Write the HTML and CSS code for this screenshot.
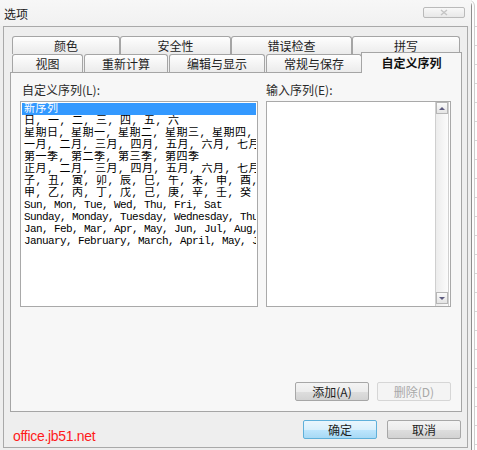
FILE: index.html
```html
<!DOCTYPE html>
<html lang="zh-CN">
<head>
    <meta charset="UTF-8">
    <meta name="viewport" content="width=device-width, initial-scale=1.0">
    <title>选项</title>
    <link rel="stylesheet" href="styles.css">
</head>
<body>
    <div class="window">
        <div class="titlebar">
            <span class="title">选项</span>
            <span class="close-btn">
                <svg width="8" height="7" viewBox="0 0 8 7">
                    <path d="M1 1 L7 6 M7 1 L1 6" stroke="#c4c4c4" stroke-width="1.4" fill="none"/>
                </svg>
            </span>
        </div>

        <div class="frame">
            <div class="tab-row back">
                <div class="tab t-color">颜色</div>
                <div class="tab t-security">安全性</div>
                <div class="tab t-check">错误检查</div>
                <div class="tab t-spell">拼写</div>
            </div>
            <div class="tab-row front">
                <div class="tab t-view">视图</div>
                <div class="tab t-calc">重新计算</div>
                <div class="tab t-edit">编辑与显示</div>
                <div class="tab t-general">常规与保存</div>
                <div class="tab t-custom active">自定义序列</div>
            </div>

            <div class="panel">
                <div class="columns">
                    <div class="col col-left">
                        <label class="field-label">自定义序列(L):</label>
                        <div class="listbox">
                            <div class="item selected">新序列</div>
                            <div class="item">日, 一, 二, 三, 四, 五, 六</div>
                            <div class="item">星期日, 星期一, 星期二, 星期三, 星期四, 星期五, 星期六</div>
                            <div class="item">一月, 二月, 三月, 四月, 五月, 六月, 七月, 八月</div>
                            <div class="item">第一季, 第二季, 第三季, 第四季</div>
                            <div class="item">正月, 二月, 三月, 四月, 五月, 六月, 七月, 八月</div>
                            <div class="item">子, 丑, 寅, 卯, 辰, 巳, 午, 未, 申, 酉, 戌, 亥</div>
                            <div class="item">甲, 乙, 丙, 丁, 戊, 己, 庚, 辛, 壬, 癸</div>
                            <div class="item latin">Sun, Mon, Tue, Wed, Thu, Fri, Sat</div>
                            <div class="item latin">Sunday, Monday, Tuesday, Wednesday, Thursday</div>
                            <div class="item latin">Jan, Feb, Mar, Apr, May, Jun, Jul, Aug, Sep</div>
                            <div class="item latin">January, February, March, April, May, June</div>
                        </div>
                    </div>
                    <div class="col col-right">
                        <label class="field-label">输入序列(E):</label>
                        <div class="entry">
                            <div class="scrollbar">
                                <span class="sb-btn"><i class="arrow up"></i></span>
                                <span class="sb-btn"><i class="arrow down"></i></span>
                            </div>
                        </div>
                    </div>
                </div>
                <div class="panel-actions">
                    <button class="btn">添加(A)</button>
                    <button class="btn" disabled>删除(D)</button>
                </div>
            </div>

            <div class="footer">
                <span class="watermark">office.jb51.net</span>
                <button class="btn btn-default">确定</button>
                <button class="btn">取消</button>
            </div>
        </div>
    </div>
</body>
</html>
```

FILE: styles.css
```css
* {
    box-sizing: border-box;
}
body {
    margin: 0;
    width: 477px;
    height: 450px;
    overflow: hidden;
    display: flex;
    font-family: "Noto Sans CJK SC", "Liberation Sans", sans-serif;
    font-size: 12px;
    color: #1e1e1e;
    background-color: #ffffff;
    background-image: repeating-linear-gradient(to bottom, transparent 0, transparent 18px, #d6d6d6 18px, #d6d6d6 19px);
    background-position: 0 8px;
}
.window {
    width: 472px;
    height: 450px;
    padding-left: 3px;
    display: flex;
    flex-direction: column;
    background: #eeeeee;
    border-right: 1px solid #8e8e8e;
    border-radius: 0 6px 0 0;
    box-shadow: 2px 0 0 #fdfdfd, 3px 0 0 #cdcdcd;
}
.titlebar {
    height: 26px;
    display: flex;
    justify-content: space-between;
    margin-left: -3px;
    padding: 0 6px 0 4px;
    background: linear-gradient(#f7f7f7, #f1f1f1);
}
.title {
    line-height: 16px;
    margin-top: 6px;
    color: #1a1a1a;
}
.close-btn {
    width: 42px;
    height: 11px;
    margin-top: 7px;
    display: flex;
    align-items: center;
    justify-content: center;
    border: 1px solid #bababa;
    border-radius: 2px;
    background: linear-gradient(#f8f8f8, #e8e8e8);
}

/* outer frame */
.frame {
    width: 465px;
    height: 422px;
    padding: 9px 5px 0 6px;
    display: flex;
    flex-direction: column;
    border: 1px solid #a9a9a9;
}

/* tabs */
.tab-row {
    display: flex;
    height: 18px;
    margin-left: 2px;
}
.tab {
    height: 18px;
    display: flex;
    align-items: center;
    justify-content: center;
    line-height: 16px;
    border: 1px solid #a5a5a5;
    border-bottom: none;
    border-radius: 3px 3px 0 0;
    background: linear-gradient(#fefefe, #ebebeb);
    color: #1e1e1e;
}
.t-color { width: 108px; }
.t-security { width: 111px; }
.t-check { width: 121px; }
.t-spell { width: 108px; }
.t-view { width: 71px; margin-right: 1px; }
.t-calc { width: 84px; margin-right: 1px; }
.t-edit { width: 96px; margin-right: 1px; }
.t-general { width: 96px; }
.t-custom { width: 101px; margin-left: -1px; }
.front {
    align-items: flex-end;
}
.tab.active {
    position: relative;
    z-index: 1;
    height: 21px;
    margin-bottom: -1px;
    padding-bottom: 1px;
    border-radius: 0;
    background: #f7f7f7;
    font-weight: bold;
    color: #111;
}

/* tab page */
.panel {
    width: 452px;
    height: 340px;
    padding: 9px 10px 10px 9px;
    display: flex;
    flex-direction: column;
    border: 1px solid #a5a5a5;
    background: #f7f7f7;
}
.columns {
    display: flex;
    gap: 8px;
}
.col-left { width: 238px; }
.col-right { width: 185px; }
.field-label {
    display: block;
    height: 16px;
    line-height: 16px;
    margin-bottom: 3px;
    padding-left: 2px;
    color: #2a2a2a;
}
.col-right .field-label {
    padding-left: 0;
}
.listbox {
    height: 206px;
    padding: 1px;
    overflow: hidden;
    border: 1px solid #a9a9a9;
    background: #fff;
}
.item {
    height: 12px;
    line-height: 12px;
    padding-left: 2px;
    white-space: nowrap;
    overflow: hidden;
    font-family: "Liberation Mono", "Noto Sans CJK SC", monospace;
    font-size: 11px;
    letter-spacing: 0.5px;
    word-spacing: -1.7px;
    color: #000;
}
.item.latin {
    letter-spacing: -0.6px;
    word-spacing: 0;
}
.item.selected {
    background: #3399ff;
    color: #fff;
}
.entry {
    height: 206px;
    display: flex;
    justify-content: flex-end;
    padding: 0 1px 0 0;
    border: 1px solid #a9a9a9;
    background: #fff;
}
.scrollbar {
    width: 14px;
    display: flex;
    flex-direction: column;
    justify-content: space-between;
    padding-bottom: 2px;
    border-left: 1px solid #cfcfcf;
    border-right: 1px solid #cfcfcf;
    background: linear-gradient(to right, #ececec, #fbfbfb);
}
.sb-btn {
    width: 12px;
    height: 12px;
    display: flex;
    align-items: center;
    justify-content: center;
    border: 1px solid #b6b6b6;
    background: linear-gradient(#fbfbfb, #e4e4e4);
}
.arrow {
    width: 0;
    height: 0;
    border-left: 3px solid transparent;
    border-right: 3px solid transparent;
}
.arrow.up { border-bottom: 3px solid #5e5c80; }
.arrow.down { border-top: 3px solid #5e5c80; }

/* buttons */
.panel-actions {
    margin-top: auto;
    display: flex;
    justify-content: flex-end;
    gap: 8px;
}
.btn {
    width: 74px;
    height: 19px;
    padding: 0;
    font-family: "Noto Sans CJK SC", "Liberation Sans", sans-serif;
    font-size: 12px;
    line-height: 16px;
    color: #1e1e1e;
    border: 1px solid #a7a7a7;
    border-radius: 2px;
    background: linear-gradient(#f4f4f4 0%, #ececec 50%, #dedede 51%, #d2d2d2 100%);
}
.btn:disabled {
    color: #a8a8a8;
    border-color: #d6d6d6;
    background: #f4f4f4;
}
.btn-default {
    border-color: #5fb0da;
    background: linear-gradient(#eaf6fd 0%, #d9f0fc 50%, #bee6fd 51%, #a7d9f5 100%);
}
.footer {
    display: flex;
    align-items: flex-end;
    gap: 10px;
    margin-top: 8px;
    margin-right: 1px;
}
.watermark {
    margin-left: 3px;
    margin-right: auto;
    margin-bottom: -5px;
    line-height: 16px;
    font-family: "Liberation Sans", sans-serif;
    font-size: 14px;
    letter-spacing: -0.3px;
    color: #ff1a1a;
}
```
